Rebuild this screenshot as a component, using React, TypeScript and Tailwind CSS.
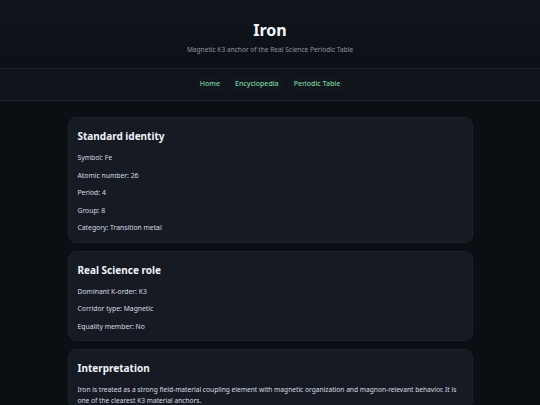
const identity = [
  "Symbol: Fe",
  "Atomic number: 26",
  "Period: 4",
  "Group: 8",
  "Category: Transition metal",
];

const role = ["Dominant K-order: K3", "Corridor type: Magnetic", "Equality member: No"];

const links = ["Home", "Encyclopedia", "Periodic Table"];

function Card({ title, children }: { title: string; children: React.ReactNode }) {
  return (
    <section className="rounded-lg border border-[#1c232c] bg-[#161b23] px-[9px] pt-[9px] pb-[1px]">
      <h2 className="text-[10px] font-bold text-[#f0f3f6] leading-[18px] mb-[8px]">{title}</h2>
      {children}
    </section>
  );
}

export default function App() {
  return (
    <div
      className="min-h-[405px] bg-[#0b0e13] text-[#d6dbe1]"
      style={{ fontFamily: '"Noto Sans", "Open Sans", sans-serif' }}
    >
      <header className="h-[68px] bg-gradient-to-b from-[#10151c] to-[#0c1016] flex flex-col items-center pt-[19px]">
        <h1 className="text-[16px] font-bold text-[#f5f7fa] leading-[22px]">Iron</h1>
        <p className="text-[6.6px] text-[#8d95a0] mt-[4px] leading-[10px]">
          Magnetic K3 anchor of the Real Science Periodic Table
        </p>
      </header>

      <nav className="h-[33px] border-y border-[#1d232c] bg-[#0f141a] flex items-center justify-center gap-[5px]">
        {links.map((l) => (
          <a
            key={l}
            href="#"
            className="px-[5px] py-[3px] rounded-md bg-[#10161c] text-[7px] font-medium text-[#7dd3a0]"
          >
            {l}
          </a>
        ))}
      </nav>

      <main className="w-[405px] mx-auto pt-[16px] flex flex-col gap-[8px]">
        <Card title="Standard identity">
          {identity.map((t) => (
            <p key={t} className="text-[6.8px] leading-[10px] mb-[7.5px]">
              {t}
            </p>
          ))}
        </Card>
        <Card title="Real Science role">
          {role.map((t) => (
            <p key={t} className="text-[6.8px] leading-[10px] mb-[7.5px]">
              {t}
            </p>
          ))}
        </Card>
        <Card title="Interpretation">
          <p className="text-[6.65px] leading-[10.7px]">
            Iron is treated as a strong field-material coupling element with magnetic organization and magnon-relevant
            behavior. It is one of the clearest K3 material anchors.
          </p>
        </Card>
      </main>
    </div>
  );
}
